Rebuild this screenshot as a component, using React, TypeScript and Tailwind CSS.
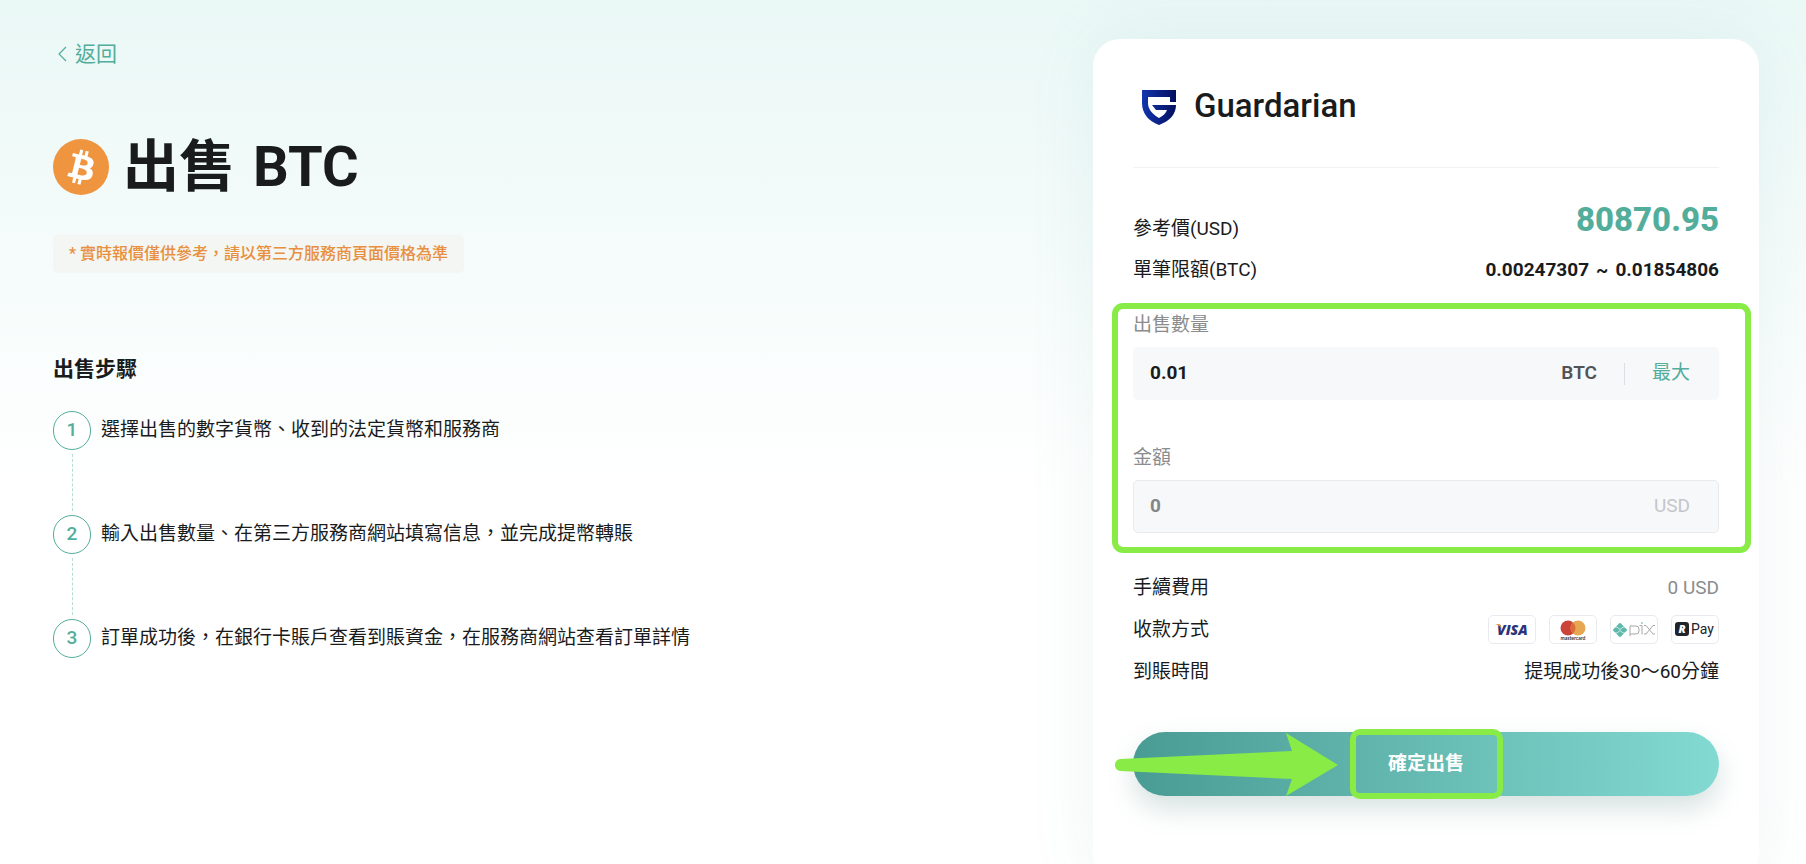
import React from 'react';

const STEPS = [
  '選擇出售的數字貨幣、收到的法定貨幣和服務商',
  '輸入出售數量、在第三方服務商網站填寫信息，並完成提幣轉賬',
  '訂單成功後，在銀行卡賬戶查看到賬資金，在服務商網站查看訂單詳情',
];

const BitcoinIcon: React.FC = () => (
  <svg viewBox="0 0 32 32" className="h-14 w-14 shrink-0" aria-hidden="true">
    <circle cx="16" cy="16" r="16" fill="#f0953f" />
    <path
      fill="#fff"
      d="M23.19 14.02c.31-2.1-1.28-3.22-3.47-3.98l.71-2.84-1.73-.43-.69 2.76c-.46-.11-.92-.22-1.39-.33l.7-2.78-1.73-.43-.71 2.84c-.38-.09-.75-.17-1.1-.26l-2.39-.6-.46 1.85s1.28.3 1.26.31c.7.18.83.64.8 1.01l-1.97 7.93c-.09.22-.31.54-.81.42.02.02-1.26-.32-1.26-.32l-.86 1.99 2.25.56c.42.1.83.21 1.23.32l-.71 2.87 1.72.43.71-2.84c.48.13.93.25 1.38.36l-.71 2.82 1.73.43.72-2.86c2.95.56 5.16.33 6.1-2.33.75-2.15-.04-3.39-1.59-4.19 1.13-.26 1.98-1 2.21-2.53zm-3.95 5.54c-.53 2.15-4.15.99-5.32.7l.95-3.81c1.17.29 4.93.87 4.37 3.11zm.54-5.57c-.49 1.95-3.5.96-4.47.72l.86-3.46c.97.24 4.11.7 3.61 2.74z"
    />
  </svg>
);

const GuardarianLogo: React.FC = () => (
  <svg viewBox="0 0 34 35" className="h-[35px] w-[34px]" aria-hidden="true">
    <defs>
      <linearGradient id="shield" x1="0" y1="0" x2="1" y2="0">
        <stop offset="0" stopColor="#1236ac" />
        <stop offset="1" stopColor="#030f5e" />
      </linearGradient>
    </defs>
    <path
      fill="url(#shield)"
      fillRule="evenodd"
      d="M0 0h34v12h-6V7H6v6c0 6 4 11 11 15 4-2 7-5 8-8H14l-4-5h24c0 9-6 16-17 20C6 31 0 23 0 13Z"
    />
  </svg>
);

const CardBadge: React.FC<{ label: string; children: React.ReactNode }> = ({ label, children }) => (
  <li className="h-[29px] w-12 rounded-[5px] border border-[#e9eaf0] bg-white">
    <svg viewBox="0 0 46 27" className="h-full w-full" role="img" aria-label={label}>
      {children}
    </svg>
  </li>
);

const PaymentMethods: React.FC = () => (
  <ul className="flex gap-[13px]">
    <CardBadge label="VISA">
      <text x="8" y="19" fontSize="14" fontWeight="800" fontStyle="italic" fontFamily="Open Sans, sans-serif" fill="#2a3478">VISA</text>
      <path d="M6 8h5l2 5c-1-2-3-4-7-5Z" fill="#e5a13d" />
    </CardBadge>
    <CardBadge label="Mastercard">
      <circle cx="18" cy="12" r="7.5" fill="#cc4338" />
      <circle cx="28" cy="12" r="7.5" fill="#e6a652" />
      <path d="M23 6.4a7.5 7.5 0 0 1 0 11.2a7.5 7.5 0 0 1 0-11.2Z" fill="#dd6b3a" />
      <text x="23" y="24" fontSize="5" fontWeight="700" textAnchor="middle" fontFamily="Lato, sans-serif" fill="#333">mastercard</text>
    </CardBadge>
    <CardBadge label="pix">
      <path d="m9 8 6 6-6 6-6-6Z" fill="#5fb9ac" stroke="#5fb9ac" strokeWidth="2" strokeLinejoin="round" />
      <path d="M3 11h3l3 2.500 3-2.500h3M3 17h3l3-2.500 3 2.500h3" fill="none" stroke="#fff" strokeWidth=".7" />
      <path d="M19 20V10h6q3 0 3 3v2q0 3-3 3h-6M28.500 9.500h2.500v9M33 9.500h2l7 8.500h2M33 18h2l7-8.500h2" fill="none" stroke="#a5a7a7" strokeWidth="1" />
      <path d="m31 6 1 1-1 1-1-1Z" fill="#5fb9ac" />
    </CardBadge>
    <CardBadge label="R Pay">
      <rect x="3" y="6" width="14" height="14" rx="3" fill="#20242b" />
      <text x="10" y="17" fontSize="11" fontWeight="800" fontStyle="italic" textAnchor="middle" fontFamily="Open Sans, sans-serif" fill="#fff">R</text>
      <text x="19" y="18" fontSize="14" fontFamily="Roboto, sans-serif" fill="#20242b">Pay</text>
    </CardBadge>
  </ul>
);

const App: React.FC = () => {
  return (
    <div className="h-screen overflow-hidden bg-white bg-linear-to-b from-[#eaf8f6] to-white to-[490px] font-['Roboto','Noto_Sans_CJK_TC',sans-serif] text-[#191b1c]">
      <div className="grid grid-cols-[1040fr_666fr] pl-[53px] pr-[47px]">
        {/* Left column */}
        <main className="pt-10">
          <a href="#back" className="flex w-fit items-center gap-2 pl-[5px] text-[21px] leading-7 text-[#52ad9b]">
            <svg viewBox="0 0 9 16" className="h-4 w-[9px]" fill="none" stroke="currentColor" aria-hidden="true">
              <path d="M8 1 1 8l7 7" strokeWidth="1.2" />
            </svg>
            返回
          </a>
          <h1 className="mt-[67px] flex items-center gap-[14px] text-[56px] font-bold leading-[64px]">
            <BitcoinIcon />
            <span>出售</span>
            <span className="ml-1">BTC</span>
          </h1>
          <p className="mt-9 flex h-[38px] w-fit items-center rounded-[5px] bg-[#f3f6f2] px-4 text-[16px] font-medium text-[#e88f40]">
            * 實時報價僅供參考，請以第三方服務商頁面價格為準
          </p>

          <h2 className="mt-20 text-[21px] font-bold leading-8">出售步驟</h2>
          <ol className="mt-[26px]">
            {STEPS.map((step, i) => (
              <li key={step} className="flex gap-[10px]">
                <div className="flex flex-col items-center">
                  <span className="flex h-[39px] w-[38px] items-center justify-center rounded-full border border-[#52ad9b] bg-white text-[19px] font-medium text-[#52ad9b]">
                    {i + 1}
                  </span>
                  {i < STEPS.length - 1 && <span className="my-1 h-[57px] border-l border-dashed border-[#b5ddd5]"></span>}
                </div>
                <span className="text-[19px] leading-[37px]">{step}</span>
              </li>
            ))}
          </ol>
        </main>

        {/* Order card */}
        <form className="mt-[39px] rounded-[27px] bg-white px-10 pb-[84px] shadow-[0_0_70px_rgba(82,160,148,0.09)]" onSubmit={(e) => e.preventDefault()}>
          <header className="flex h-[129px] items-center gap-[18px] border-b border-[#f1f2f3] pl-[9px] pt-[9px]">
            <GuardarianLogo />
            <span className="pb-1 text-[33px] font-medium">Guardarian</span>
          </header>

          <dl className="mt-[29px]">
            <div className="flex items-end justify-between">
              <dt className="text-[19px] leading-7">參考價(USD)</dt>
              <dd className="text-[33px] font-extrabold leading-[46px] text-[#52ad9b]">80870.95</dd>
            </div>
            <div className="mt-[13px] flex items-center justify-between leading-7">
              <dt className="text-[19px]">單筆限額(BTC)</dt>
              <dd className="flex gap-[7px] text-[19px] font-bold">
                <span>0.00247307</span>
                <span>~</span>
                <span>0.01854806</span>
              </dd>
            </div>
          </dl>

          <div className="relative mt-[27px]">
            <label htmlFor="amount" className="block text-[19px] leading-7 text-[#8b8c8d]">出售數量</label>
            <div className="mt-2 flex h-[53px] items-center rounded-[5px] bg-[#f7f8fa] pl-[17px] pr-[29px]">
              <input id="amount" defaultValue="0.01" className="min-w-0 flex-1 bg-transparent text-[19px] font-bold outline-none" />
              <span className="text-[19px] font-semibold text-[#525354]">BTC</span>
              <span className="mx-[27px] h-[22px] w-px bg-[#dddfe2]"></span>
              <button type="button" className="text-[19px] text-[#52ad9b]">最大</button>
            </div>
            <label htmlFor="total" className="mt-[44px] block text-[19px] leading-7 text-[#8b8c8d]">金額</label>
            <div className="mt-2 flex h-[53px] items-center rounded-[5px] border border-[#e9eaec] bg-[#f7f8fa] pl-4 pr-7">
              <input id="total" defaultValue="0" readOnly className="min-w-0 flex-1 bg-transparent text-[19px] font-bold text-[#858687] outline-none" />
              <span className="text-[19px] text-[#c4c5cc]">USD</span>
            </div>
            {/* Highlight frame */}
            <div className="pointer-events-none absolute -bottom-5 -left-[21px] -right-8 -top-2 rounded-[11px] border-[6px] border-[#89eb46]"></div>
          </div>

          <dl className="mt-[41px] text-[19px] leading-7">
            <div className="flex items-center justify-between">
              <dt>手續費用</dt>
              <dd className="text-[#8b8c8d]">0 USD</dd>
            </div>
            <div className="mt-[13px] flex items-center justify-between">
              <dt>收款方式</dt>
              <dd><PaymentMethods /></dd>
            </div>
            <div className="mt-[14px] flex items-center justify-between">
              <dt>到賬時間</dt>
              <dd>提現成功後30～60分鐘</dd>
            </div>
          </dl>

          <div className="relative mt-[46px]">
            <button type="submit" className="h-16 w-full rounded-full bg-linear-to-r from-[#499c93] to-[#83dad2] text-[19px] font-bold text-white shadow-[0_13px_27px_rgba(73,125,118,0.22)]">
              確定出售
            </button>
            <div className="pointer-events-none absolute inset-0 flex items-center justify-center">
              <span className="h-[70px] w-[153px] shrink-0 rounded-[10px] border-[6px] border-[#89eb46]"></span>
            </div>
            <svg viewBox="0 0 223 64" className="pointer-events-none absolute -left-[18px] top-0 h-16 w-[223px]" aria-hidden="true">
              <path fill="#89eb46" d="M5 27 177 19 171 1 223 33 171 64 177 47 5 39Q0 38 0 33T5 27Z" />
            </svg>
          </div>
        </form>
      </div>
    </div>
  );
};

export default App;
